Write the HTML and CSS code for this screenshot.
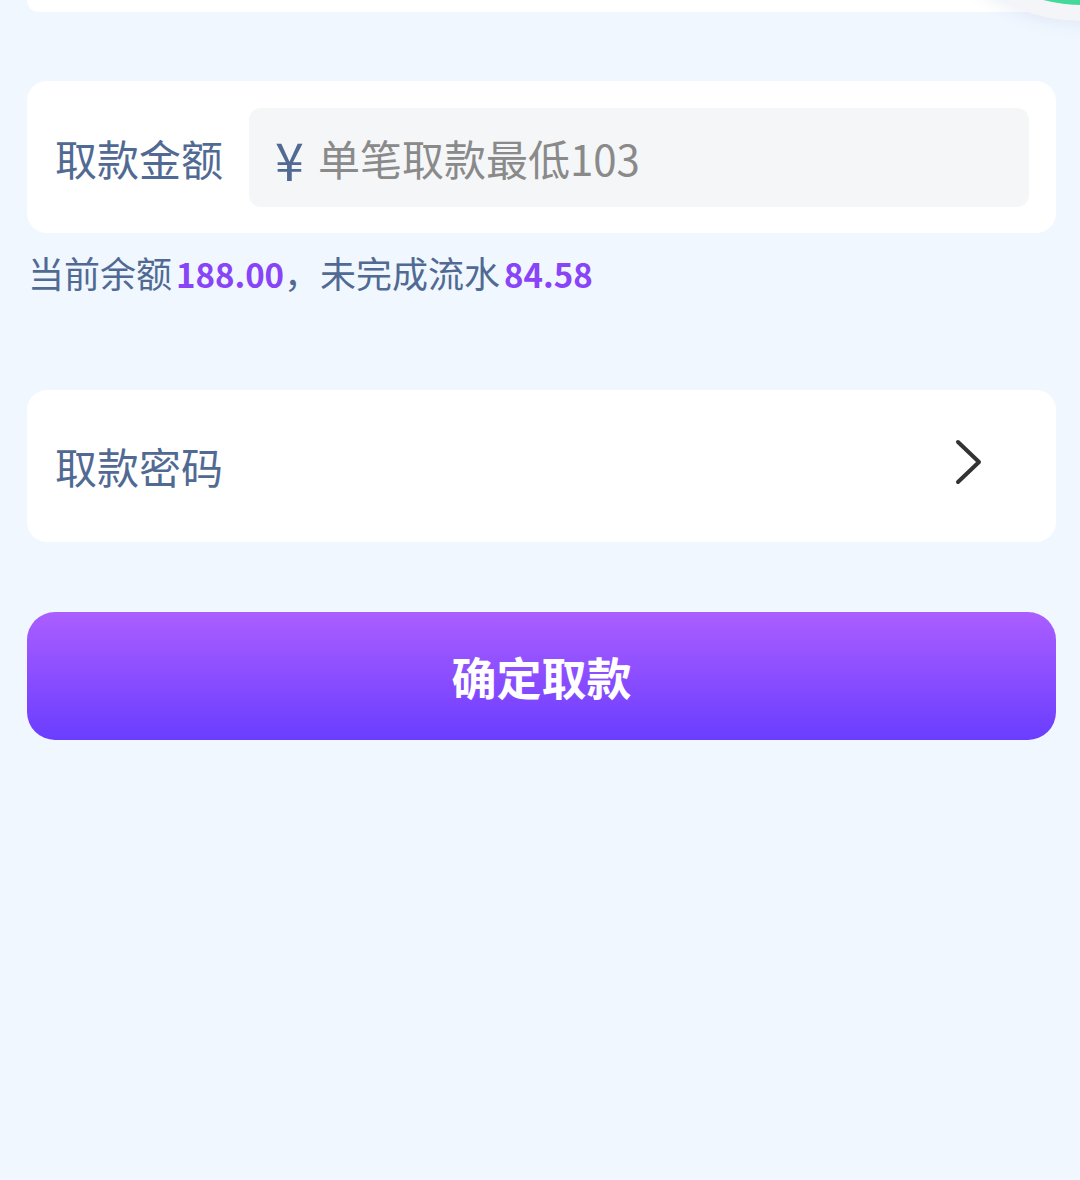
FILE: index.html
```html
<!DOCTYPE html>
<html lang="zh-CN">
<head>
  <meta charset="UTF-8">
  <meta name="viewport" content="width=device-width, initial-scale=1.0">
  <title>取款</title>
  <link rel="stylesheet" href="styles.css">
</head>
<body>
  <div class="float-btn"></div>

  <div class="page">
    <div class="top-card"></div>

    <div class="card amount-card">
      <label class="label" for="amount">取款金额</label>
      <div class="amount-box">
        <span class="currency">¥</span>
        <input type="text" id="amount" placeholder="单笔取款最低103">
      </div>
    </div>

    <p class="balance">当前余额<b>188.00</b>，未完成流水<b>84.58</b></p>

    <div class="card password-card">
      <span class="label">取款密码</span>
      <svg class="arrow" width="30" height="48" viewBox="0 0 30 48">
        <path d="M4 4 L25 24 L4 44" fill="none" stroke="#333333" stroke-width="4" stroke-linecap="round" stroke-linejoin="round"/>
      </svg>
    </div>

    <button class="submit">确定取款</button>
  </div>
</body>
</html>
```

FILE: styles.css
```css
body {
  margin: 0;
  background: #f0f7ff;
  font-family: "Noto Sans CJK SC", "Noto Sans", sans-serif;
  overflow: hidden;
}
.page {
  margin: 0 24px 0 27px;
}
.top-card {
  height: 12px;
  background: #ffffff;
  border-radius: 0 0 20px 20px;
}
.card {
  background: #ffffff;
  border-radius: 20px;
  display: flex;
  align-items: center;
}
.label {
  font-size: 42px;
  color: #516a93;
  width: 164px;
  flex-shrink: 0;
  line-height: 1;
  white-space: nowrap;
}
.amount-card {
  margin-top: 69px;
  height: 152px;
  box-sizing: border-box;
  padding: 27px 27px 26px 28px;
  gap: 30px;
}
.amount-box {
  flex: 1;
  height: 99px;
  background: #f5f6f8;
  border-radius: 12px;
  display: flex;
  align-items: center;
  padding-left: 26px;
}
.currency {
  font-size: 52px;
  line-height: 1;
  color: #516a93;
  margin-right: 14px;
  margin-top: 2px;
}
.amount-box input {
  flex: 1;
  border: none;
  background: transparent;
  outline: none;
  font-family: inherit;
  font-size: 42px;
  color: #333333;
  padding: 0;
}
.amount-box input::placeholder {
  color: #8a8a8a;
}
.balance {
  margin: 12px 0 0 1px;
  height: 54px;
  font-size: 36px;
  line-height: 54px;
  color: #516a93;
}
.balance b {
  color: #8944f7;
  font-size: 33px;
  font-weight: 700;
  margin-left: 4px;
  line-height: 1;
}
.password-card {
  margin-top: 91px;
  height: 152px;
  padding: 0 72px 0 28px;
  justify-content: space-between;
}
.arrow {
  display: block;
  margin-top: -8px;
}
.submit {
  display: block;
  width: 100%;
  height: 128px;
  margin-top: 70px;
  border: none;
  border-radius: 28px;
  background: linear-gradient(to bottom, #ab5eff, #6a3dff);
  color: #ffffff;
  font-family: inherit;
  font-size: 45px;
  font-weight: 700;
  cursor: pointer;
}
.float-btn {
  position: absolute;
  left: 907px;
  top: -331px;
  width: 320px;
  height: 320px;
  border-radius: 50%;
  background: #44d99a;
  border: 16px solid #f4f5f8;
  box-shadow: 0 4px 16px rgba(120, 140, 180, 0.12);
}
```
